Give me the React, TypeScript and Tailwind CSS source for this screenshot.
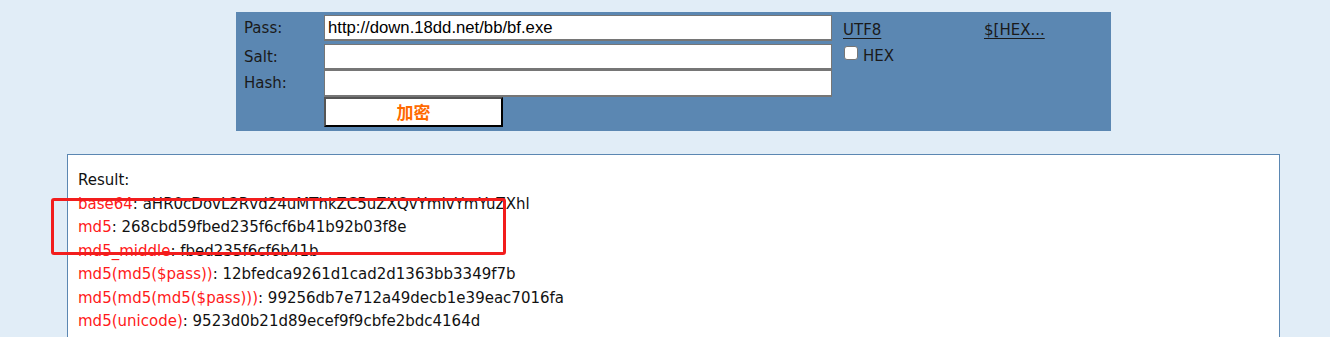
import React from "react";

const rows: [string, string][] = [
  ["base64", "aHR0cDovL2Rvd24uMThkZC5uZXQvYmIvYmYuZXhl"],
  ["md5", "268cbd59fbed235f6cf6b41b92b03f8e"],
  ["md5_middle", "fbed235f6cf6b41b"],
  ["md5(md5($pass))", "12bfedca9261d1cad2d1363bb3349f7b"],
  ["md5(md5(md5($pass)))", "99256db7e712a49decb1e39eac7016fa"],
  ["md5(unicode)", "9523d0b21d89ecef9f9cbfe2bdc4164d"],
  ["md5(base64($pass))", "d41fb9b6e0c4a3cd31f8a0de1b87b2ac"],
];

const verdana = "font-['DejaVu_Sans',Verdana,sans-serif]";

function Field({ value }: { value?: string }) {
  return (
    <div className="flex h-full w-[508px] items-center border border-b-2 border-[#767676] bg-white pl-[3px] font-['Liberation_Sans',Arial,sans-serif] text-[16.7px] text-black">
      {value}
    </div>
  );
}

export default function App() {
  return (
    <div className={`relative h-[337px] w-[1330px] overflow-hidden bg-[#e1edf7] ${verdana} text-[15px] text-[#1a1a1a]`}>
      {/* form panel */}
      <div className="ml-[236px] mt-[12px] h-[119px] w-[875px] bg-[#5b87b2] pt-[3px]">
        <div className="flex h-[26px]">
          <div className="flex w-[88px] items-center pl-[8px]">Pass:</div>
          <Field value="http://down.18dd.net/bb/bf.exe" />
          <div className="flex w-[152px] items-start pl-[11px] pt-[4px]">
            <span className="underline underline-offset-[3px]">UTF8</span>
          </div>
          <div className="pt-[4px]">
            <span className="underline underline-offset-[3px]">$[HEX...</span>
          </div>
        </div>
        <div className="mt-[3px] flex h-[26px]">
          <div className="flex w-[88px] items-center pl-[8px]">Salt:</div>
          <Field />
          <div className="flex items-start gap-[5px] pl-[12px] pt-[1px]">
            <span className="mt-[1px] block h-[14px] w-[14px] rounded-[3px] border border-[#767676] bg-white" />
            <span className="mt-[2px] leading-[18px]">HEX</span>
          </div>
        </div>
        <div className="flex h-[27px]">
          <div className="flex w-[88px] items-center pl-[8px]">Hash:</div>
          <Field />
        </div>
        <div className="flex h-[30px]">
          <div className="w-[88px]" />
          <div className="flex w-[179px] items-center justify-center border-2 border-b-black border-l-[#555] border-r-black border-t-[#555] bg-white font-['Noto_Sans_CJK_SC',sans-serif] text-[17px] font-bold text-[#ff6a00]">
            加密
          </div>
        </div>
      </div>

      {/* result box */}
      <div className="ml-[67px] mt-[23px] w-[1213px] border border-[#5b87b2] bg-white pl-[10px] pt-[14px] leading-[23.5px] text-[#111]">
        <div>Result:</div>
        {rows.map(([k, v]) => (
          <div key={k} className="whitespace-nowrap">
            <span className="text-[#ff1a1a]">{k}</span>: {v}
          </div>
        ))}
      </div>

      {/* annotation box */}
      <div className="absolute left-[51px] top-[198px] h-[57px] w-[455px] rounded-[3px] border-[3px] border-[#f21d1d]" />
    </div>
  );
}
